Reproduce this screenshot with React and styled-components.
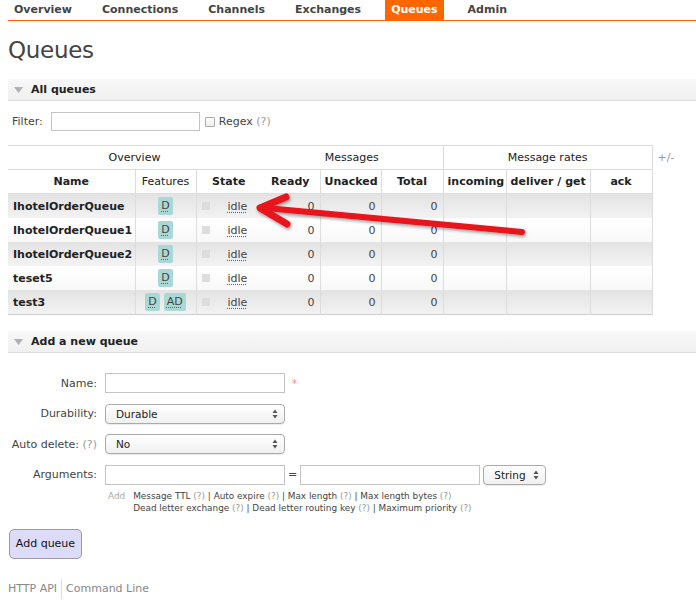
import React from 'react';
import styled, { createGlobalStyle } from 'styled-components';

const GlobalStyle = createGlobalStyle`
  body {
    margin: 0;
    background: #fff;
    font-family: "DejaVu Sans", Verdana, sans-serif;
    font-size: 11px;
    color: #444;
  }
`;

const Page = styled.div`
  position: relative;
  padding-left: 8px;
  width: 688px;
  height: 614px;
  overflow: hidden;
`;

const Nav = styled.ul`
  display: flex;
  margin: 0;
  padding: 0;
  list-style: none;
  border-bottom: 1px solid #f60;
  height: 20px;
`;

const NavItem = styled.li`
  padding: 0 6px;
  margin-right: 18px;
  line-height: 20px;
  font-size: 11px;
  font-weight: bold;
  color: ${p => (p.$active ? '#fff' : '#444')};
  background: ${p => (p.$active ? '#f60' : 'transparent')};
`;

const Title = styled.h1`
  margin: 15px 0 15px;
  font-size: 23px;
  line-height: 28px;
  font-weight: normal;
  letter-spacing: -0.3px;
  color: #444;
`;

const SectionHeader = styled.div`
  display: flex;
  align-items: center;
  gap: 8px;
  height: 21px;
  padding-left: 6px;
  background: linear-gradient(#f8f8f8, #f0f0f0);
  border-bottom: 1px solid #ddd;
  font-weight: bold;
  color: #222;
`;

const FilterRow = styled.div`
  display: flex;
  align-items: center;
  padding: 11px 0 14px 4px;
`;

const TextInput = styled.div`
  box-sizing: border-box;
  width: ${p => p.$w}px;
  height: ${p => p.$h || 20}px;
  border: 1px solid #c4c4c4;
  background: #fff;
  margin-left: ${p => p.$ml || 0}px;
`;

const Check = styled.span`
  box-sizing: border-box;
  width: 10px;
  height: 10px;
  border: 1px solid #aaa;
  border-radius: 1px;
  margin: 0 4px 0 5px;
  background: linear-gradient(#fff, #eee);
`;

const Hint = styled.span`
  color: #999;
`;

const TableRow = styled.div`
  display: flex;
  align-items: flex-start;
`;

const List = styled.table`
  width: 644px;
  table-layout: fixed;
  border-collapse: collapse;
  border-top: 1px solid #ddd;
  border-bottom: 1px solid #ccc;
`;

const Th = styled.th`
  height: 23px;
  padding: 0 4px;
  font-weight: ${p => (p.$bold ? 'bold' : 'normal')};
  color: #222;
  text-align: center;
  white-space: nowrap;
  border-left: ${p => (p.$sep ? '1px solid #ddd' : 'none')};
  border-right: ${p => (p.$end ? '1px solid #ddd' : 'none')};
  border-bottom: 1px solid #ddd;
`;

const Tr = styled.tr`
  background: ${p =>
    p.$alt ? 'linear-gradient(#e3e3e3, #f3f3f3)' : 'linear-gradient(#fff, #f8f8f8)'};
`;

const Td = styled.td`
  height: 24px;
  padding: 0 5px;
  white-space: nowrap;
  text-align: ${p => p.$align || 'left'};
  font-weight: ${p => (p.$bold ? 'bold' : 'normal')};
  color: ${p => (p.$bold ? '#222' : '#444')};
  border-left: ${p => (p.$sep ? '1px solid #ddd' : 'none')};
  border-right: ${p => (p.$end ? '1px solid #ddd' : 'none')};
`;

const Badge = styled.abbr`
  display: inline-block;
  padding: 2px 3px;
  margin: 0 2px;
  border-radius: 2px;
  background: #a9d8d5;
  color: #444;
  text-decoration: underline dotted #666;
  text-underline-offset: 2px;
  line-height: 14px;
`;

const StateCell = styled.div`
  display: flex;
  align-items: center;
`;

const StatusSquare = styled.span`
  width: 8px;
  height: 8px;
  background: #ddd;
  margin-right: 18px;
`;

const Abbr = styled.abbr`
  text-decoration: underline dotted #666;
  text-underline-offset: 2px;
`;

const PlusMinus = styled.span`
  margin: 6px 0 0 5px;
  color: #999;
`;

const Gap = styled.div`
  height: ${p => p.$h}px;
`;

const Form = styled.div`
  display: grid;
  grid-template-columns: 89px auto;
  column-gap: 8px;
  row-gap: 10.5px;
  padding-top: 20px;
  align-items: center;
`;

const Label = styled.label`
  text-align: right;
  white-space: nowrap;
  color: #444;
`;

const Field = styled.div`
  display: flex;
  align-items: center;
  gap: 3px;
`;

const Required = styled.span`
  color: #e88;
  font-size: 10px;
  margin-left: 4px;
`;

const SelectBox = styled.div`
  box-sizing: border-box;
  display: flex;
  align-items: center;
  justify-content: space-between;
  width: ${p => p.$w}px;
  height: 20px;
  padding: 0 6px 0 10px;
  border: 1px solid #aaa;
  border-radius: 4px;
  background: linear-gradient(#fff, #f0f0f0);
  box-shadow: 0 1px 1px rgba(0, 0, 0, 0.08);
  color: #222;
  font-size: 10.5px;
`;

const Eq = styled.span`
  color: #444;
`;

const HelpBlock = styled.div`
  display: flex;
  gap: 8px;
  padding: 5px 0 0 100px;
  font-size: 8.9px;
  line-height: 12px;
  color: #444;
`;

const HelpAdd = styled.span`
  color: #aaa;
`;

const Button = styled.button`
  display: block;
  margin: 15px 0 0 1px;
  width: 73px;
  height: 30px;
  padding: 0;
  border: 1px solid #99a;
  border-radius: 5px;
  background: #dcdcfa;
  font-family: inherit;
  font-size: 11px;
  color: #111;
`;

const Footer = styled.div`
  display: flex;
  align-items: center;
  margin-top: 20px;
  height: 20px;
  color: #888;
`;

const FooterSep = styled.span`
  width: 1px;
  height: 20px;
  background: #ddd;
  margin: 0 4px;
`;

const ArrowLayer = styled.svg`
  position: absolute;
  left: 0;
  top: 0;
  pointer-events: none;
`;

const SelectArrows = () => (
  <svg width="6" height="10" viewBox="0 0 6 10">
    <path d="M3 0.5 L5.5 4 L0.5 4 Z" fill="#555" />
    <path d="M3 9.5 L5.5 6 L0.5 6 Z" fill="#555" />
  </svg>
);

const Toggle = () => (
  <svg width="9" height="6" viewBox="0 0 9 6">
    <path d="M0 0 L9 0 L4.5 6 Z" fill="#b0b0b0" />
  </svg>
);

const queues = [
  { name: 'IhotelOrderQueue', features: ['D'] },
  { name: 'IhotelOrderQueue1', features: ['D'] },
  { name: 'IhotelOrderQueue2', features: ['D'] },
  { name: 'teset5', features: ['D'] },
  { name: 'test3', features: ['D', 'AD'] },
];

function QueueTable() {
  return (
    <TableRow>
      <List>
        <colgroup>
          <col style={{ width: 127 }} />
          <col style={{ width: 61 }} />
          <col style={{ width: 65 }} />
          <col style={{ width: 59 }} />
          <col style={{ width: 61 }} />
          <col style={{ width: 62 }} />
          <col style={{ width: 63 }} />
          <col style={{ width: 84 }} />
          <col style={{ width: 62 }} />
        </colgroup>
        <thead>
          <tr>
            <Th colSpan={3}>Overview</Th>
            <Th colSpan={3}>Messages</Th>
            <Th colSpan={3} $sep $end>Message rates</Th>
          </tr>
          <tr>
            <Th $bold>Name</Th>
            <Th $sep>Features</Th>
            <Th $sep $bold>State</Th>
            <Th $bold>Ready</Th>
            <Th $sep $bold>Unacked</Th>
            <Th $sep $bold>Total</Th>
            <Th $sep $bold>incoming</Th>
            <Th $sep $bold>deliver / get</Th>
            <Th $sep $end $bold>ack</Th>
          </tr>
        </thead>
        <tbody>
          {queues.map((q, i) => (
            <Tr key={q.name} $alt={i % 2 === 0}>
              <Td $bold>{q.name}</Td>
              <Td $sep $align="center">
                {q.features.map(f => (
                  <Badge key={f}>{f}</Badge>
                ))}
              </Td>
              <Td $sep>
                <StateCell>
                  <StatusSquare />
                  <Abbr>idle</Abbr>
                </StateCell>
              </Td>
              <Td $align="right">0</Td>
              <Td $sep $align="right">0</Td>
              <Td $sep $align="right">0</Td>
              <Td $sep />
              <Td $sep />
              <Td $sep $end />
            </Tr>
          ))}
        </tbody>
      </List>
      <PlusMinus>+/-</PlusMinus>
    </TableRow>
  );
}

function AddQueueForm() {
  return (
    <>
      <Form>
        <Label>Name:</Label>
        <Field>
          <TextInput $w={180} />
          <Required>*</Required>
        </Field>
        <Label>Durability:</Label>
        <Field>
          <SelectBox $w={180}>
            Durable
            <SelectArrows />
          </SelectBox>
        </Field>
        <Label>
          Auto delete: <Hint>(?)</Hint>
        </Label>
        <Field>
          <SelectBox $w={180}>
            No
            <SelectArrows />
          </SelectBox>
        </Field>
        <Label>Arguments:</Label>
        <Field>
          <TextInput $w={180} />
          <Eq>=</Eq>
          <TextInput $w={180} />
          <SelectBox $w={63}>
            String
            <SelectArrows />
          </SelectBox>
        </Field>
      </Form>
      <HelpBlock>
        <HelpAdd>Add</HelpAdd>
        <div>
          <div>
            Message TTL <Hint>(?)</Hint> | Auto expire <Hint>(?)</Hint> | Max length{' '}
            <Hint>(?)</Hint> | Max length bytes <Hint>(?)</Hint>
          </div>
          <div>
            Dead letter exchange <Hint>(?)</Hint> | Dead letter routing key <Hint>(?)</Hint> |
            Maximum priority <Hint>(?)</Hint>
          </div>
        </div>
      </HelpBlock>
      <Button>Add queue</Button>
    </>
  );
}

export default function App() {
  return (
    <Page>
      <GlobalStyle />
      <Nav>
        <NavItem>Overview</NavItem>
        <NavItem>Connections</NavItem>
        <NavItem>Channels</NavItem>
        <NavItem>Exchanges</NavItem>
        <NavItem $active>Queues</NavItem>
        <NavItem>Admin</NavItem>
      </Nav>
      <Title>Queues</Title>
      <SectionHeader>
        <Toggle />
        All queues
      </SectionHeader>
      <FilterRow>
        Filter:
        <TextInput $w={149} $h={19} $ml={8} />
        <Check />
        Regex&nbsp;<Hint>(?)</Hint>
      </FilterRow>
      <QueueTable />
      <Gap $h={16} />
      <SectionHeader>
        <Toggle />
        Add a new queue
      </SectionHeader>
      <AddQueueForm />
      <Footer>
        HTTP API
        <FooterSep />
        Command Line
      </Footer>
      <ArrowLayer width="696" height="614" viewBox="0 0 696 614">
        <defs>
          <filter id="arrowShadow" x="-10%" y="-50%" width="120%" height="200%">
            <feDropShadow dx="1" dy="2" stdDeviation="1.5" floodColor="#000" floodOpacity="0.35" />
          </filter>
        </defs>
        <g filter="url(#arrowShadow)" stroke="#e8141b" strokeLinecap="round" strokeLinejoin="round" fill="none">
          <path d="M522 232 L266 208" strokeWidth="6" />
          <path d="M286 197 L260 208 L287 224" strokeWidth="7" />
        </g>
      </ArrowLayer>
    </Page>
  );
}
